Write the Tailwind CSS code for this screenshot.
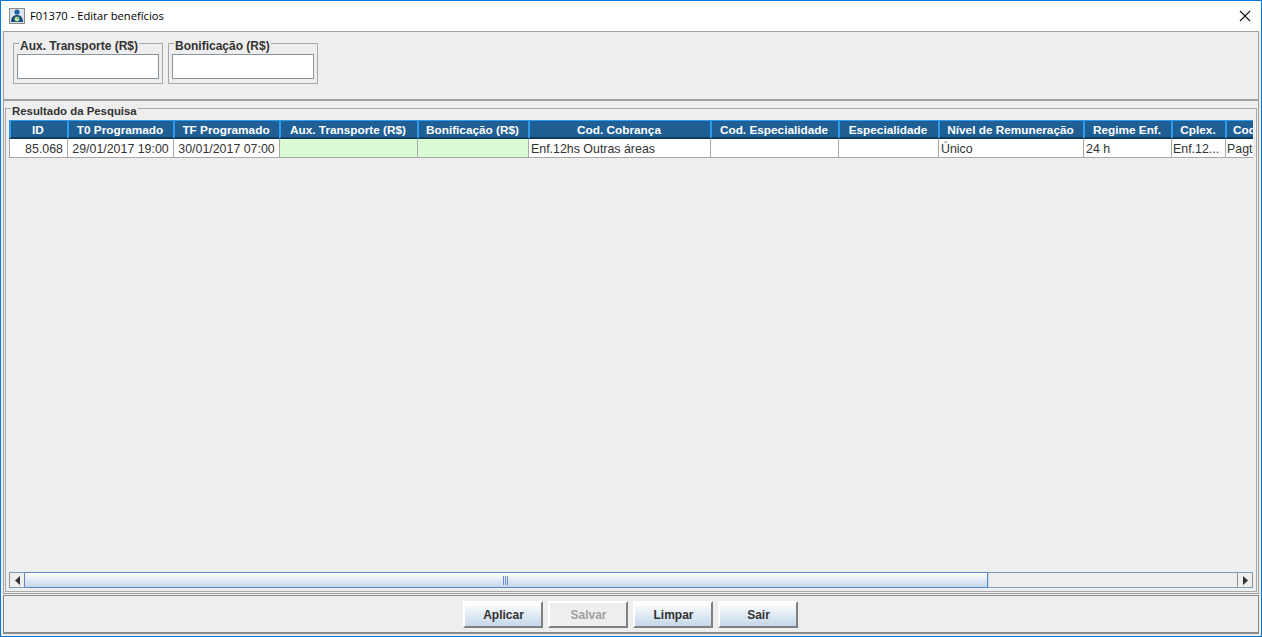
<!DOCTYPE html>
<html lang="en">
<head>
  <meta charset="UTF-8" />
  <title>F01370 - Editar benefícios</title>
  <script src="https://cdn.jsdelivr.net/npm/@tailwindcss/browser@4"></script>
</head>
<body class="overflow-hidden bg-[#eeeeee]">
  <div class="w-[1262px] h-[637px] flex flex-col border border-[#0078d7] font-['Liberation_Sans',sans-serif] text-[12px] text-[#333333]">

    <!-- Title bar -->
    <div class="h-[30px] bg-white flex items-center pl-[8px] pr-[10px] shrink-0">
      <svg width="16" height="16" viewBox="0 0 16 16" class="shrink-0">
        <rect x="0.5" y="0.5" width="15" height="15" fill="#dfe4ea" stroke="#8a8a8a"/>
        <circle cx="8" cy="4" r="2.6" fill="#1f5fa8"/>
        <path d="M2 14c0-4.500 2.500-7 6-7s6 2.500 6 7z" fill="#17498a"/>
        <circle cx="8" cy="11" r="2.600" fill="#e4f5dc" stroke="#2f7f3f"/>
        <path d="M8 9.500V11h1.300" stroke="#2f7f3f" fill="none" stroke-width=".7"/>
      </svg>
      <span class="ml-[5px] font-['Open_Sans',sans-serif] text-[11.2px] text-black">F01370 - Editar benefícios</span>
      <svg width="12" height="12" viewBox="0 0 12 12" class="ml-auto"><path d="M1 1l10 10M11 1L1 11" stroke="#111" stroke-width="1.1" fill="none"/></svg>
    </div>

    <!-- Filters -->
    <div class="h-[69px] mx-[2px] border border-[#a0a0a0] pl-[9px] pt-[11px] flex gap-[5px] shrink-0">
      <div class="relative w-[150px] h-[41px] border border-[#a8a8a8] pt-[10px] pl-[3px]">
        <span class="absolute top-[-5px] left-[5px] px-px bg-[#eeeeee] font-bold leading-[14px]">Aux. Transporte (R$)</span>
        <input class="w-[142px] h-[25px] bg-white border border-[#8a949c] block" />
      </div>
      <div class="relative w-[150px] h-[41px] border border-[#a8a8a8] pt-[10px] pl-[3px]">
        <span class="absolute top-[-5px] left-[5px] px-px bg-[#eeeeee] font-bold leading-[14px]">Bonificação (R$)</span>
        <input class="w-[142px] h-[25px] bg-white border border-[#8a949c] block" />
      </div>
    </div>

    <!-- Results -->
    <div class="h-[494px] mx-[2px] border border-[#a0a0a0] px-px pt-[7px] shrink-0">
      <div class="relative h-[484px] border border-[#a8a8a8] px-[3px] pt-[11px] flex flex-col">
        <span class="absolute top-[-4px] left-[5px] px-px bg-[#eeeeee] text-[11.4px] font-bold leading-[13px]">Resultado da Pesquisa</span>
        <div class="flex-1 overflow-hidden">
          <div class="flex h-[19px] w-[1244px] bg-[#1f5f94] text-white font-bold text-[11.8px]">
            <div class="w-[58px] pr-[2px] text-center leading-[18px] border-l-2 border-t border-[#2f9bea] border-b-2 border-b-[#123a5c]">ID</div>
            <div class="w-[106px] pr-[2px] text-center leading-[18px] border-l-2 border-t border-[#2f9bea] border-b-2 border-b-[#123a5c]">T0 Programado</div>
            <div class="w-[106px] pr-[2px] text-center leading-[18px] border-l-2 border-t border-[#2f9bea] border-b-2 border-b-[#123a5c]">TF Programado</div>
            <div class="w-[138px] pr-[2px] text-center leading-[18px] border-l-2 border-t border-[#2f9bea] border-b-2 border-b-[#123a5c]">Aux. Transporte (R$)</div>
            <div class="w-[111px] pr-[2px] text-center leading-[18px] border-l-2 border-t border-[#2f9bea] border-b-2 border-b-[#123a5c]">Bonificação (R$)</div>
            <div class="w-[182px] pr-[2px] text-center leading-[18px] border-l-2 border-t border-[#2f9bea] border-b-2 border-b-[#123a5c]">Cod. Cobrança</div>
            <div class="w-[128px] pr-[2px] text-center leading-[18px] border-l-2 border-t border-[#2f9bea] border-b-2 border-b-[#123a5c]">Cod. Especialidade</div>
            <div class="w-[100px] pr-[2px] text-center leading-[18px] border-l-2 border-t border-[#2f9bea] border-b-2 border-b-[#123a5c]">Especialidade</div>
            <div class="w-[145px] pr-[2px] text-center leading-[18px] border-l-2 border-t border-[#2f9bea] border-b-2 border-b-[#123a5c]">Nível de Remuneração</div>
            <div class="w-[88px] pr-[2px] text-center leading-[18px] border-l-2 border-t border-[#2f9bea] border-b-2 border-b-[#123a5c]">Regime Enf.</div>
            <div class="w-[54px] pr-[2px] text-center leading-[18px] border-l-2 border-t border-[#2f9bea] border-b-2 border-b-[#123a5c]">Cplex.</div>
            <div class="w-[28px] pl-[6px] leading-[18px] border-l-2 border-t border-[#2f9bea] border-b-2 border-b-[#123a5c] overflow-hidden whitespace-nowrap">Cod</div>
          </div>
          <div class="flex h-[19px] w-[1244px] bg-white border-b border-[#a8a8a8] text-[12.4px] leading-[20px] whitespace-nowrap">
            <div class="w-[58px] text-right pr-[4px] border-l border-[#a8a8a8]">85.068</div>
            <div class="w-[106px] text-center border-l border-[#a8a8a8]">29/01/2017 19:00</div>
            <div class="w-[106px] text-center border-l border-[#a8a8a8]">30/01/2017 07:00</div>
            <div class="w-[138px] bg-[#d9fad2] border-l border-[#a8a8a8]"></div>
            <div class="w-[111px] bg-[#d9fad2] border-l border-[#a8a8a8]"></div>
            <div class="w-[182px] pl-[2px] border-l border-[#a8a8a8]">Enf.12hs Outras áreas</div>
            <div class="w-[128px] border-l border-[#a8a8a8]"></div>
            <div class="w-[100px] border-l border-[#a8a8a8]"></div>
            <div class="w-[145px] pl-[2px] border-l border-[#a8a8a8]">Único</div>
            <div class="w-[88px] pl-[2px] border-l border-[#a8a8a8]">24 h</div>
            <div class="w-[54px] pl-px border-l border-[#a8a8a8]">Enf.12...</div>
            <div class="w-[28px] pl-px border-l border-[#a8a8a8] overflow-hidden">Pagto</div>
          </div>
        </div>
        <!-- Horizontal scrollbar -->
        <div class="flex h-[16px] mb-[3px] border-y border-[#7f9cc0] bg-[#eeeeee] shrink-0">
          <div class="w-[16px] flex items-center justify-center border-l border-[#8a949c] border-r border-r-[#5f87c8]">
            <svg width="5" height="9" viewBox="0 0 5 9"><path d="M5 0v9L0 4.500z" fill="#333"/></svg>
          </div>
          <div class="w-[963px] -my-px flex items-center justify-center bg-gradient-to-b from-white to-[#c5d7ea] border-y border-r border-[#5f87c8]">
            <svg width="6" height="9" viewBox="0 0 6 9"><path d="M0.500 0v9M2.500 0v9M4.500 0v9" stroke="#6a8fd0" fill="none"/></svg>
          </div>
          <div class="flex-1 border-l border-[#c5d7ea]"></div>
          <div class="w-[16px] flex items-center justify-center border-l border-r border-[#8a949c]">
            <svg width="5" height="9" viewBox="0 0 5 9"><path d="M0 0v9l5-4.500z" fill="#333"/></svg>
          </div>
        </div>
      </div>
    </div>

    <!-- Buttons -->
    <div class="h-[39px] mt-px mx-[2px] pr-[2px] border border-[#8a8a8a] border-b-2 flex justify-center items-center gap-[5px] font-bold">
      <button class="w-[80px] h-[27px] pl-[2px] pt-[2px] border-2 border-white border-r-[#808080] border-b-[#808080] bg-gradient-to-b from-white to-[#c5d7ea]">Aplicar</button>
      <button class="w-[80px] h-[27px] pl-[2px] pt-[2px] border-2 border-white border-r-[#808080] border-b-[#808080] text-[#a0a0a0]">Salvar</button>
      <button class="w-[80px] h-[27px] pl-[2px] pt-[2px] border-2 border-white border-r-[#808080] border-b-[#808080] bg-gradient-to-b from-white to-[#c5d7ea]">Limpar</button>
      <button class="w-[80px] h-[27px] pl-[2px] pt-[2px] border-2 border-white border-r-[#808080] border-b-[#808080] bg-gradient-to-b from-white to-[#c5d7ea]">Sair</button>
    </div>
  </div>
</body>
</html>
